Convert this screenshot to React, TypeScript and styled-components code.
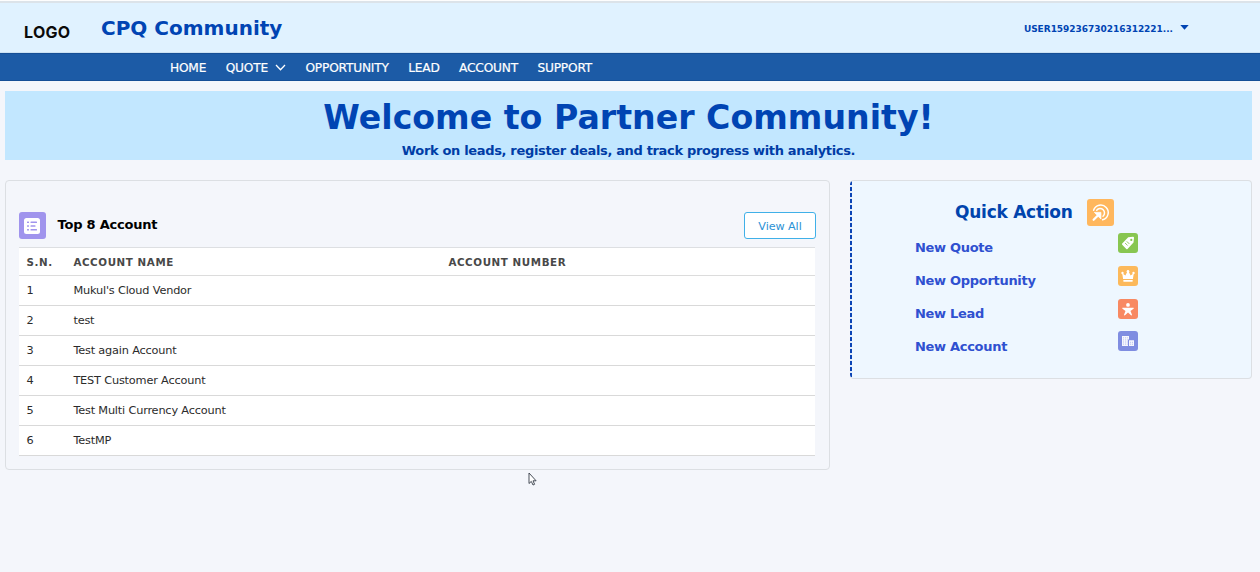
import React from "react";
import styled, { createGlobalStyle } from "styled-components";

const GlobalStyle = createGlobalStyle`
  * { box-sizing: border-box; }
  body {
    margin: 0;
    background: #f4f6fb;
    font-family: Verdana, "DejaVu Sans", sans-serif;
    color: #2b2b2b;
  }
`;

const Page = styled.div`
  height: 572px;
  overflow: hidden;
`;

const Header = styled.header`
  height: 53px;
  display: flex;
  align-items: flex-start;
  background: #e0f2ff;
  border-bottom: 1px solid #cde2f3;
  box-shadow: inset 0 1px 0 #fdfdfd, inset 0 3px 0 #dce3e9;
`;

const Logo = styled.div`
  width: 76px;
  padding: 22px 0 0 24px;
  font: 700 16px/20px Inter, sans-serif;
  letter-spacing: 0.3px;
  color: #0a0a0a;
`;

const Brand = styled.h1`
  margin: 0;
  padding: 16px 0 0 25px;
  font-size: 20px;
  line-height: 24px;
  color: #0044b3;
`;

const UserMenu = styled.div`
  margin-left: auto;
  padding: 22px 71px 0 0;
  display: flex;
  font-size: 9px;
  line-height: 14px;
  font-weight: 700;
  letter-spacing: -0.03px;
  color: #0044b3;
`;

const Caret = styled.svg`
  width: 9px;
  height: 5px;
  margin: 3px 0 0 7px;
  fill: #0044b3;
`;

const Nav = styled.nav`
  height: 28px;
  padding: 1px 0 0 170px;
  display: flex;
  align-items: center;
  gap: 19.5px;
  background: #1c5ba6;
  border-top: 1px solid #164f96;
  border-bottom: 1px solid #164f96;
`;

const NavItem = styled.a`
  display: flex;
  align-items: center;
  gap: 7px;
  font-size: 12.2px;
  line-height: 16px;
  letter-spacing: -0.2px;
  color: #fff;
  -webkit-text-stroke: 0.2px #fff;
`;

const Banner = styled.section`
  height: 69px;
  margin: 10px 8px 0 5px;
  padding-top: 7px;
  background: #c2e7ff;
  text-align: center;
  color: #0044b3;
`;

const BannerTitle = styled.h2`
  margin: 0;
  font-size: 33.2px;
  line-height: 40px;
`;

const BannerText = styled.p`
  margin: 4px 0 0;
  font-size: 13px;
  letter-spacing: -0.34px;
  line-height: 17px;
  font-weight: 700;
  color: #003da6;
`;

const Columns = styled.main`
  margin: 20px 8px 0 5px;
  display: flex;
  align-items: flex-start;
  justify-content: space-between;
`;

const AccountCard = styled.section`
  width: 825px;
  height: 290px;
  padding: 31px 14px 0 13px;
  border: 1px solid #dcdfe3;
  border-radius: 4px;
`;

const CardHead = styled.div`
  width: 797px;
  height: 27px;
  display: flex;
`;

const CardTitle = styled.h3`
  flex: 1;
  margin: 0 0 0 11.5px;
  font-size: 13px;
  letter-spacing: -0.22px;
  line-height: 25px;
  color: #000;
`;

const ViewAll = styled.button`
  width: 72px;
  height: 27px;
  padding: 2px 0 0;
  border: 1px solid #40b0e8;
  border-radius: 3px;
  background: #fff;
  color: #2c92d5;
  font: 11.2px "DejaVu Sans", sans-serif;
  letter-spacing: -0.08px;
`;

const IconTile = styled.svg<{ $size: number; $color: string }>`
  flex: none;
  width: ${(p) => p.$size}px;
  height: ${(p) => p.$size}px;
  border-radius: 3px;
  background: ${(p) => p.$color};
  fill: #fff;
`;

const Table = styled.table`
  width: 100%;
  margin-top: 8px;
  border-collapse: separate;
  border-spacing: 0;
  table-layout: fixed;
  background: #fff;
  border-top: 1px solid #dddfe2;
`;

const HeadCell = styled.th<{ $width?: number }>`
  width: ${(p) => (p.$width ? `${p.$width}px` : "auto")};
  height: 28px;
  padding: 1px 0 0 7.4px;
  border-bottom: 1px solid #dcdcdc;
  text-align: left;
  font-size: 10.3px;
  letter-spacing: 0.6px;
  color: #484848;
`;

const Cell = styled.td`
  height: 30px;
  padding: 0 0 0 7.4px;
  border-bottom: 1px solid #d9d9d9;
  font-size: 11.3px;
  letter-spacing: -0.18px;
`;

const QuickCard = styled.section`
  width: 402px;
  height: 199px;
  padding: 18px 0 0 65px;
  border: 1px solid #dcdfe3;
  border-left: 0;
  border-radius: 4px;
  background:
    repeating-linear-gradient(to bottom, #0a44b5 0 4px, #dfeafa 4px 6px) left top / 2px 100% no-repeat,
    #eef7ff;
`;

const QuickHead = styled.div`
  display: flex;
  margin-left: 40px;
  height: 34px;
`;

const QuickTitle = styled.h3`
  width: 132px;
  margin: 0;
  font-size: 17px;
  letter-spacing: -0.25px;
  line-height: 26px;
  color: #0044ad;
`;

const QuickRow = styled.div`
  width: 223px;
  height: 32.8px;
  display: flex;
  justify-content: space-between;
`;

const QuickLink = styled.a`
  padding-top: 7.4px;
  font-size: 13px;
  letter-spacing: -0.3px;
  line-height: 16px;
  font-weight: 700;
  color: #2f50d0;
`;

const Pointer = styled.svg`
  position: absolute;
  left: 528px;
  top: 472px;
  width: 9px;
  height: 14px;
`;

const ListIcon = () => (
  <IconTile $size={27} $color="#a094ed" viewBox="0 0 27 27">
    <rect x="5" y="6" width="16" height="16" rx="2.5" />
    <g fill="#a094ed">
      {[9.5, 13.2, 17].map((y) => (
        <React.Fragment key={y}>
          <rect x="8" y={y} width="2" height="1.5" rx=".5" />
          <rect x="11.5" y={y} width={y === 13.2 ? 5 : 6.5} height="1.5" rx=".5" />
        </React.Fragment>
      ))}
    </g>
  </IconTile>
);

const ActionIcon = () => (
  <IconTile $size={27} $color="#ffb75d" viewBox="0 0 27 27">
    <g fill="none" stroke="#fff" strokeWidth="1.5" strokeLinecap="round">
      <path d="M6.6 11.2A7.5 7.5 0 1 1 15.6 20.8" />
      <path d="M9.7 11.2A4.4 4.4 0 1 1 16 17.3" />
      <path d="M6.6 20.8L11.8 15.6" strokeWidth="2.2" />
    </g>
    <path d="M7.4 13.4H13.9V20L11.6 17.7L9.7 15.8Z" stroke="#fff" strokeWidth=".8" strokeLinejoin="round" />
  </IconTile>
);

const QuoteIcon = () => (
  <IconTile $size={20} $color="#88c651" viewBox="0 0 20 20">
    <path fillRule="evenodd" d="M10.2 4.3L15 3.8Q16 3.8 16 4.8L15.5 9.6L9.5 15.9Q8.9 16.4 8.3 15.9L4.2 11.7Q3.7 11.1 4.2 10.5ZM13.3 5.8A1.1 1.1 0 1 0 13.3 8A1.1 1.1 0 1 0 13.3 5.8Z" />
    <path d="M7.1 10L9.6 12.5M8.8 8.4L11.3 10.9" stroke="#88c651" strokeWidth=".9" />
  </IconTile>
);

const CrownIcon = () => (
  <IconTile $size={20} $color="#fcb95b" viewBox="0 0 20 20">
    <path d="M4.2 7.2L7.4 9.6L9.4 5.6H10.6L12.6 9.6L15.8 7.2L14.9 13H5.1Z" />
    <circle cx="4.5" cy="7" r="1.2" />
    <circle cx="10" cy="5.2" r="1.3" />
    <circle cx="15.5" cy="7" r="1.2" />
    <rect x="5.2" y="13.9" width="9.6" height="1.8" rx=".8" />
  </IconTile>
);

const LeadIcon = () => (
  <IconTile $size={20} $color="#f88962" viewBox="0 0 20 20">
    <circle cx="10" cy="5.9" r="1.9" />
    <path d="M4.5 8.7H15.5Q16.2 9.2 15.5 9.8L12.5 11.9L14 15.8Q13.8 16.7 13 16.2L10 13.6L7 16.2Q6.2 16.7 6 15.8L7.5 11.9L4.5 9.8Q3.8 9.2 4.5 8.7Z" />
  </IconTile>
);

const AccountIcon = () => (
  <IconTile $size={20} $color="#7f8de1" viewBox="0 0 20 20">
    <path d="M4 5H11V8.5H10V15H4ZM11 9.2H16V15H11Z" opacity=".92" />
    <g fill="#7f8de1" opacity=".6">
      {[6.3, 8.4, 10.5, 12.6].map((y) =>
        [5.2, 7.1, 8.9].map((x) => <rect key={`${x}-${y}`} x={x} y={y} width=".8" height="1" />)
      )}
      {[10.8, 12.7].map((y) =>
        [12.2, 14.1].map((x) => <rect key={`${x}-${y}`} x={x} y={y} width=".9" height="1" />)
      )}
    </g>
  </IconTile>
);

const accounts = [
  "Mukul's Cloud Vendor",
  "test",
  "Test again Account",
  "TEST Customer Account",
  "Test Multi Currency Account",
  "TestMP",
];

const actions = [
  { label: "New Quote", Icon: QuoteIcon },
  { label: "New Opportunity", Icon: CrownIcon },
  { label: "New Lead", Icon: LeadIcon },
  { label: "New Account", Icon: AccountIcon },
];

export default function App() {
  return (
    <Page>
      <GlobalStyle />
      <Header>
        <Logo>LOGO</Logo>
        <Brand>CPQ Community</Brand>
        <UserMenu>
          USER159236730216312221...
          <Caret viewBox="0 0 9 5"><path d="M0.3 0H8.7L4.5 4.8Z" /></Caret>
        </UserMenu>
      </Header>
      <Nav>
        <NavItem>HOME</NavItem>
        <NavItem>
          QUOTE
          <svg width="11" height="7" viewBox="0 0 11 7" fill="none" stroke="#fff" strokeWidth="1.3">
            <path d="M1 1L5.5 5.7L10 1" />
          </svg>
        </NavItem>
        <NavItem>OPPORTUNITY</NavItem>
        <NavItem>LEAD</NavItem>
        <NavItem>ACCOUNT</NavItem>
        <NavItem>SUPPORT</NavItem>
      </Nav>
      <Banner>
        <BannerTitle>Welcome to Partner Community!</BannerTitle>
        <BannerText>Work on leads, register deals, and track progress with analytics.</BannerText>
      </Banner>
      <Columns>
        <AccountCard>
          <CardHead>
            <ListIcon />
            <CardTitle>Top 8 Account</CardTitle>
            <ViewAll>View All</ViewAll>
          </CardHead>
          <Table>
            <thead>
              <tr>
                <HeadCell $width={47}>S.N.</HeadCell>
                <HeadCell $width={375}>ACCOUNT NAME</HeadCell>
                <HeadCell>ACCOUNT NUMBER</HeadCell>
              </tr>
            </thead>
            <tbody>
              {accounts.map((name, i) => (
                <tr key={name}>
                  <Cell>{i + 1}</Cell>
                  <Cell>{name}</Cell>
                  <Cell />
                </tr>
              ))}
            </tbody>
          </Table>
        </AccountCard>
        <QuickCard>
          <QuickHead>
            <QuickTitle>Quick Action</QuickTitle>
            <ActionIcon />
          </QuickHead>
          {actions.map(({ label, Icon }) => (
            <QuickRow key={label}>
              <QuickLink>{label}</QuickLink>
              <Icon />
            </QuickRow>
          ))}
        </QuickCard>
      </Columns>
      <Pointer viewBox="0 0 9 14">
        <path d="M1 1V11.5L3.3 9.4L5 13L6.6 12.3L5 8.8H8.1Z" fill="#fff" stroke="#333b46" strokeWidth=".9" />
      </Pointer>
    </Page>
  );
}
